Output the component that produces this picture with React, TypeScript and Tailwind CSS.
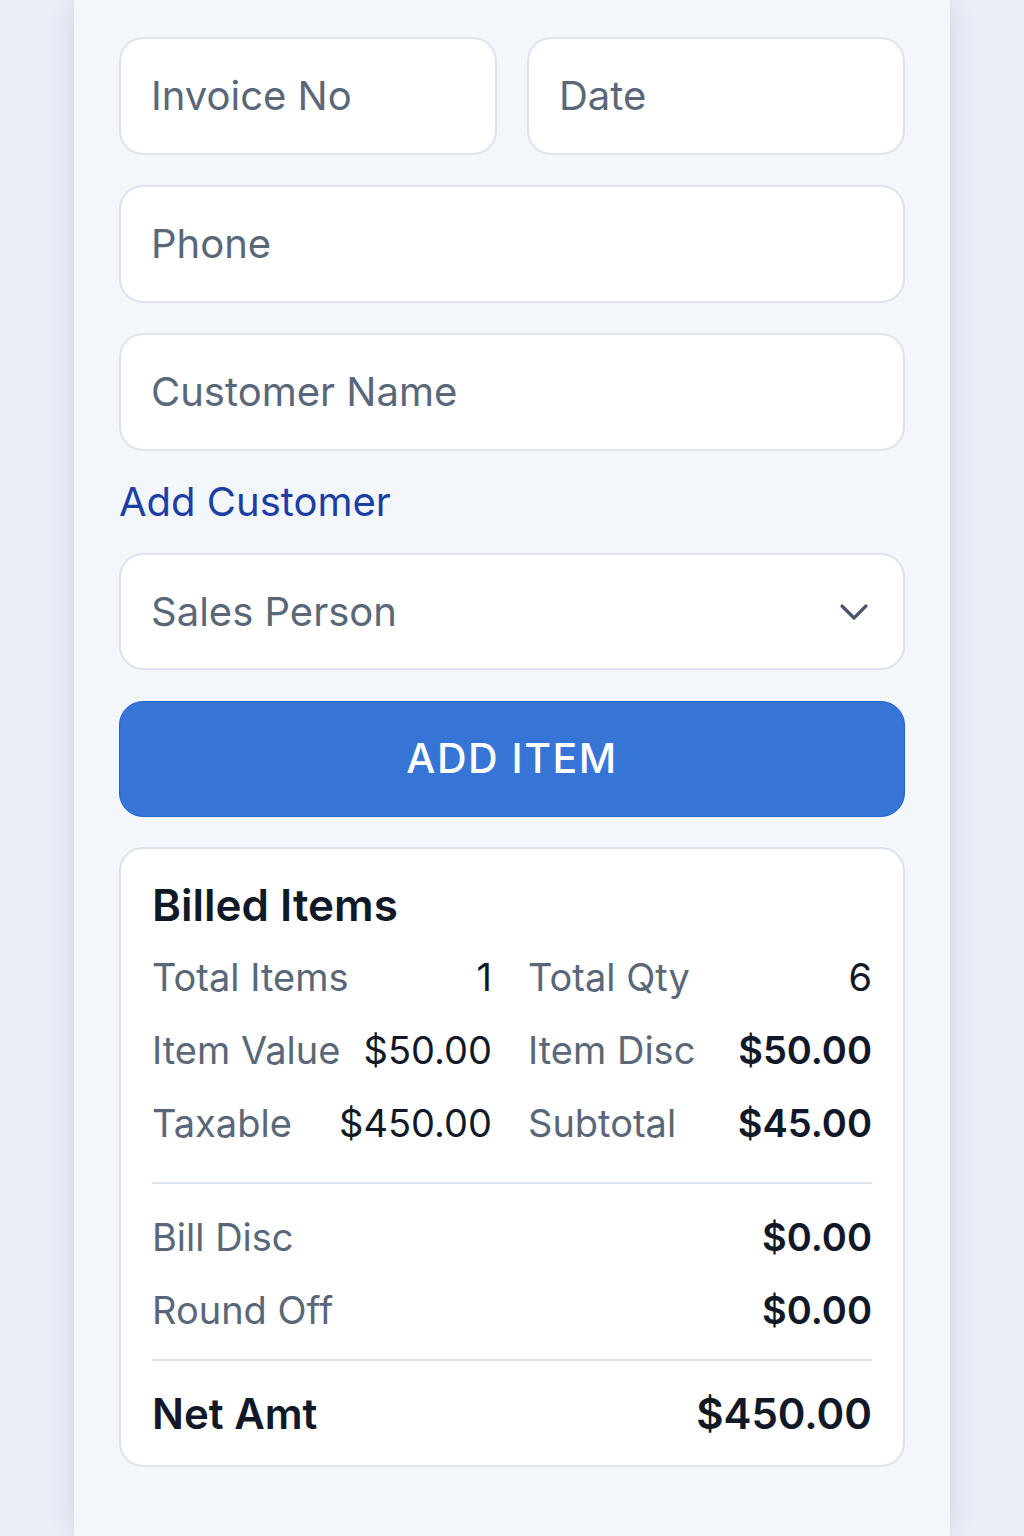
import React from 'react';

const font = { fontFamily: 'Inter, "Noto Sans", sans-serif' };

function Field({ label, className = '' }: { label: string; className?: string }) {
  return (
    <div
      className={`h-[118px] flex items-center px-[30px] bg-white border-2 border-[#dce3ee] rounded-[24px] text-[40px] text-[#5a6778] ${className}`}
    >
      {label}
    </div>
  );
}

function Stat({ label, value, strong = false }: { label: string; value: string; strong?: boolean }) {
  return (
    <div className="flex items-center justify-between h-[73px]">
      <span className="text-[#5a6778]">{label}</span>
      <span className={strong ? 'font-semibold text-[#111827]' : 'text-[#111827]'}>{value}</span>
    </div>
  );
}

export default function App() {
  return (
    <div className="min-h-[1536px] bg-[#ebf0f8] flex justify-center" style={font}>
      <div className="w-[876px] min-h-[1536px] bg-[#f3f6fb] px-[45px] pt-[37px] shadow-[0_0_28px_rgba(90,110,150,0.22)]">
        <div className="flex flex-col gap-[30px]">
          <div className="grid grid-cols-2 gap-[30px]">
            <Field label="Invoice No" />
            <Field label="Date" />
          </div>
          <Field label="Phone" />
          <Field label="Customer Name" />
        </div>

        <div className="h-[102px] flex items-center">
          <span className="text-[40px] text-[#1b3fa3]">Add Customer</span>
        </div>

        <div className="h-[117px] flex items-center justify-between px-[30px] bg-white border-2 border-[#dce3ee] rounded-[24px] text-[40px] text-[#5a6778]">
          <span>Sales Person</span>
          <svg width="30" height="18" viewBox="0 0 30 18" fill="none" className="mr-[4px]">
            <polyline points="3,3 15,15 27,3" stroke="#4b5666" strokeWidth="3.2" strokeLinecap="round" strokeLinejoin="round" />
          </svg>
        </div>

        <button className="mt-[31px] w-full h-[116px] rounded-[24px] bg-[#3675d6] border border-[#2563d0] text-white text-[41px] font-medium tracking-[1.5px]">
          ADD ITEM
        </button>

        <div className="mt-[30px] bg-white border-2 border-[#dce3ee] rounded-[24px] px-[31px] pt-[26px]">
          <h2 className="text-[44px] font-semibold text-[#111827] leading-[60px]">Billed Items</h2>
          <div className="grid grid-cols-[340px_1fr] gap-x-[36px] text-[38px] mt-[6px]">
            <Stat label="Total Items" value="1" />
            <Stat label="Total Qty" value="6" />
            <Stat label="Item Value" value="$50.00" />
            <Stat label="Item Disc" value="$50.00" strong />
            <Stat label="Taxable" value="$450.00" />
            <Stat label="Subtotal" value="$45.00" strong />
          </div>
          <div className="mt-[22px] border-t-2 border-[#dce3ee]" />
          <div className="text-[38px] pt-[17px] pb-[12px]">
            <Stat label="Bill Disc" value="$0.00" strong />
            <Stat label="Round Off" value="$0.00" strong />
          </div>
          <div className="border-t-2 border-[#dce3ee]" />
          <div className="flex items-center justify-between h-[104px] text-[42px] font-semibold text-[#111827]">
            <span>Net Amt</span>
            <span>$450.00</span>
          </div>
        </div>
      </div>
    </div>
  );
}
